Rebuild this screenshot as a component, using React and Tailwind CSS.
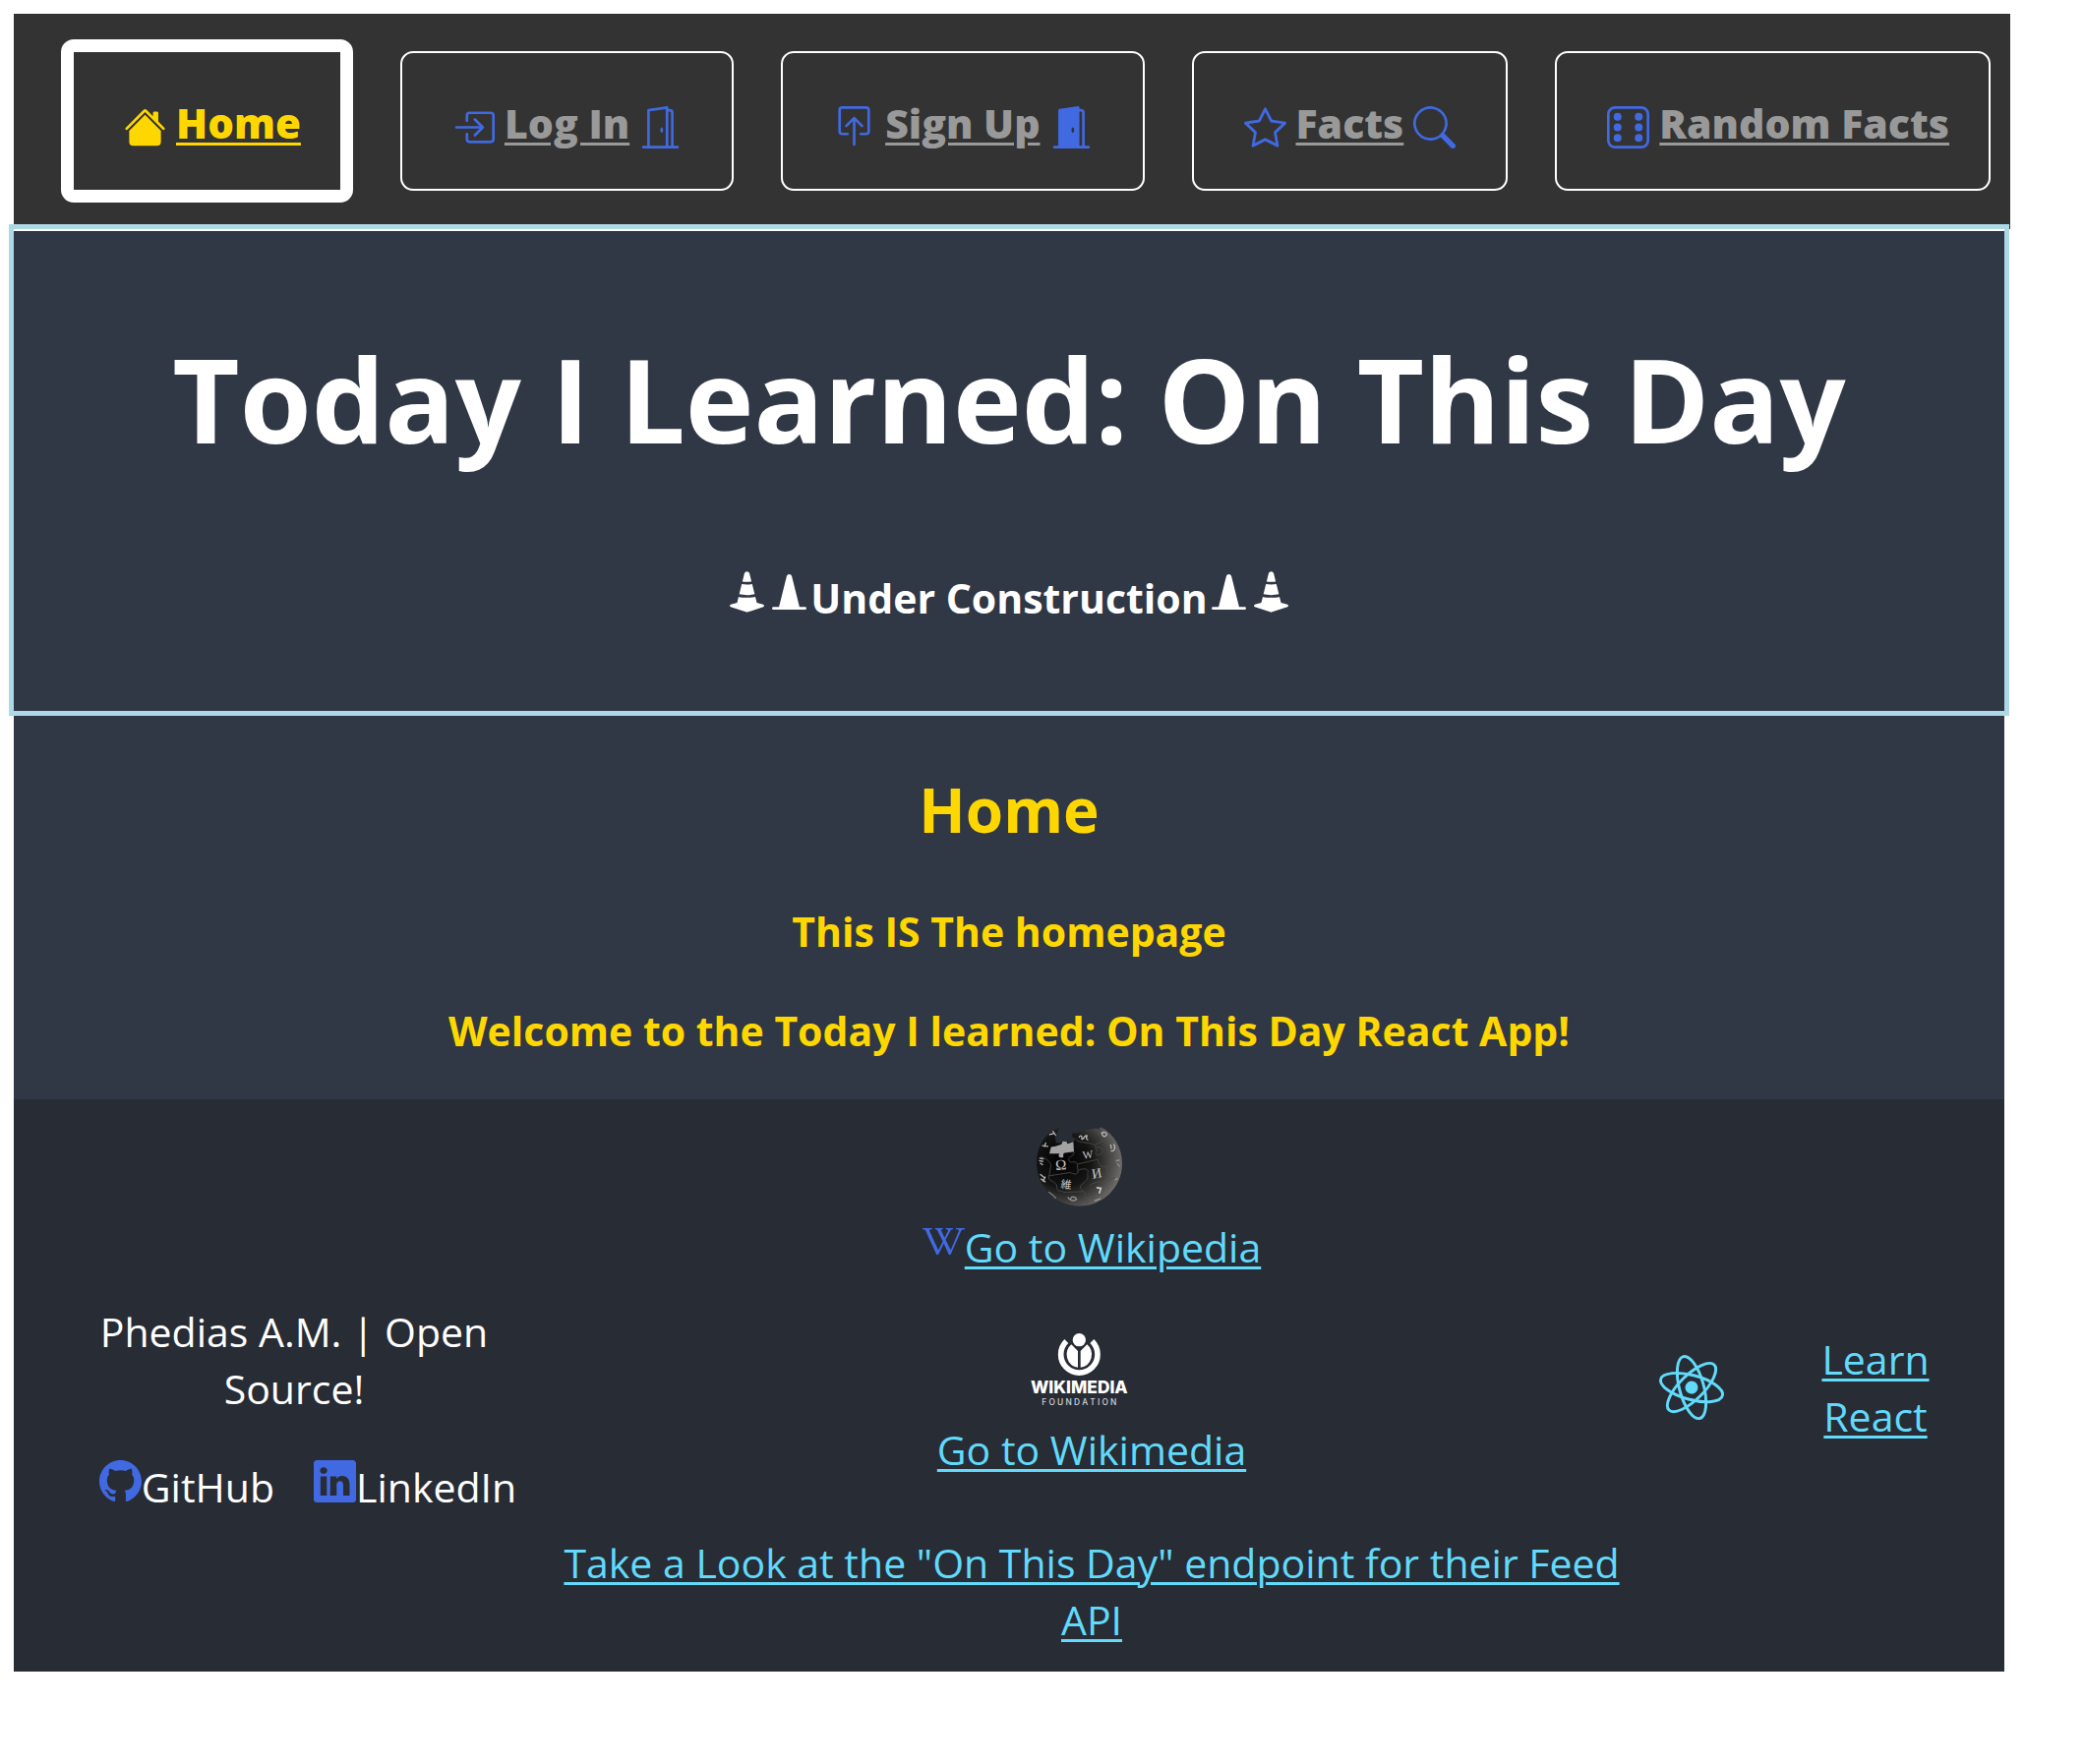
import {
  BsBoxArrowInRight,
  BsBoxArrowInUp,
  BsCone,
  BsConeStriped,
  BsDice6,
  BsDoorOpen,
  BsDoorOpenFill,
  BsGithub,
  BsHouseFill,
  BsLinkedin,
  BsSearch,
  BsStar,
  BsWikipedia,
} from "react-icons/bs";

const iconClass = "inline size-[43px] shrink-0 align-baseline";
const linkClass =
  "text-[#61dafb] underline decoration-[3px] underline-offset-[4px]";

function NavItem({ label, Lead, Trail, active }) {
  const frame = active
    ? "h-[166px] border-[13px] border-white text-[#ffd700] text-[42px]"
    : "h-[142px] border-2 border-white text-[#999999]";
  const icon = active ? "text-[#ffd700]" : "text-[#4169e1]";
  return (
    <li
      className={`flex items-center gap-[10px] rounded-[13px] pt-1 pl-[51px] ${Trail ? "pr-[51px]" : "pr-10"} ${frame}`}
    >
      <Lead className={`mt-2 size-[43px] shrink-0 ${icon}`} />
      <a
        href="#"
        className="font-extrabold whitespace-nowrap underline decoration-[3px] underline-offset-[4px]"
      >
        {label}
      </a>
      {Trail && <Trail className={`mt-2 size-[43px] shrink-0 ${icon}`} />}
    </li>
  );
}

function WikipediaGlobe() {
  const glyph = { fill: "#c9c9c9", fontFamily: "Liberation Serif, serif" };
  return (
    <svg
      viewBox="522 107 261 242"
      className="h-[81px] w-[87px]"
      role="img"
      aria-label="Wikipedia globe"
    >
      <defs>
        <radialGradient id="globe" cx="0.3" cy="0.42" r="0.75">
          <stop offset="0" stopColor="#000000" />
          <stop offset="0.45" stopColor="#141414" />
          <stop offset="0.7" stopColor="#3f3e3d" />
          <stop offset="1" stopColor="#7a7876" />
        </radialGradient>
        <clipPath id="globe-edge">
          <circle cx="652" cy="218" r="130" />
        </clipPath>
      </defs>
      <path
        d="M592 108 L572 117 C540 138 522 175 522 216 C522 290 580 348 652 348 C725 348 783 290 783 218 C783 172 758 128 720 108 L712 110 L716 118 C706 108 690 112 668 118 C662 116 652 116 648 124 L630 126 L632 138 L640 142 L634 152 L612 154 L604 148 L596 156 L582 156 L578 138 L586 124 Z"
        fill="url(#globe)"
      />
      <path
        d="M566 168 L580 166 L598 160 L602 150 L614 152 L616 158 L634 152 L636 182 L608 186 C598 190 608 198 602 200 C592 202 586 196 592 188 L561 188 Z"
        fill="#a3a3a3"
      />
      <g
        clipPath="url(#globe-edge)"
        fill="none"
        stroke="#4c4c4c"
        strokeWidth="2.5"
      >
        <path d="M636 182 C640 196 618 196 620 208 C624 222 640 206 646 220 L648 240 C650 254 636 252 624 246 L560 256 M648 220 L708 206 M700 164 L706 180 C694 196 714 196 722 184 C730 170 712 172 704 166 M708 206 C714 222 714 232 738 226 L776 222 M648 240 C662 232 684 232 678 248 C674 258 690 260 656 286 C652 302 668 296 672 316 L676 342 M560 256 C552 274 584 270 584 290 C580 304 596 300 606 306 L666 304 M536 198 C560 206 560 214 566 222 L560 256 M738 226 C730 248 748 252 744 268 C736 280 700 268 684 286 M640 142 C650 160 680 150 698 162 L724 150 C732 138 712 134 702 122 M744 268 L762 262 M724 150 C744 160 744 176 754 196" />
      </g>
      <g style={glyph} clipPath="url(#globe-edge)">
        <text x="580" y="237" fontSize="45" transform="rotate(-4 597 225)">
          Ω
        </text>
        <text x="662" y="202" fontSize="34" transform="rotate(-8 680 190)">
          W
        </text>
        <text x="690" y="262" fontSize="42" transform="rotate(-10 707 246)">
          И
        </text>
        <text
          x="596"
          y="294"
          fontSize="33"
          transform="rotate(6 612 282)"
          style={{ fontFamily: "Noto Sans CJK JP, sans-serif" }}
        >
          維
        </text>
        <path d="M705 292 L718 294 L713 310" fill="none" stroke="#c9c9c9" strokeWidth="5" />
      </g>
      <g
        clipPath="url(#globe-edge)"
        fill="none"
        stroke="#b5b5b5"
        strokeWidth="4"
        strokeLinecap="round"
      >
        <path d="M540 164 L556 166 M550 156 L546 166 M562 130 L576 126 M572 120 L580 132 M652 138 C656 130 662 134 660 144 C668 146 666 130 676 134 C672 140 674 146 678 146" />
        <path d="M720 126 C726 120 736 124 736 130 C732 140 722 136 722 128 M748 162 L750 172 M758 160 C764 172 758 182 750 180" />
        <path d="M532 202 L542 204 M531 210 L541 212 M534 218 L540 222 M534 252 L546 262 M536 266 L548 274 M548 260 L542 272" />
        <path d="M766 210 L774 208 M768 220 L775 226 M762 268 L768 264 M560 306 C566 310 574 316 580 324" opacity="0.6" />
        <path d="M618 322 C622 332 636 334 644 328 C640 318 628 318 626 326 M700 332 L716 326" opacity="0.7" />
      </g>
    </svg>
  );
}

function WikimediaLogo() {
  return (
    <svg
      viewBox="504 738 297 222"
      className="h-[74px] w-[99px]"
      role="img"
      aria-label="Wikimedia Foundation"
      fill="#ffffff"
    >
      <circle cx="652" cy="758" r="20" />
      <path
        d="M613 762 A56 56 0 1 0 691 762"
        fill="none"
        stroke="#ffffff"
        strokeWidth="17"
      />
      <path d="M628 772 L648 792 L648 842 A40 40 0 0 1 628 772 Z" />
      <path d="M676 772 L656 792 L656 842 A40 40 0 0 0 676 772 Z" />
      <text
        x="652"
        y="921"
        textAnchor="middle"
        fontSize="52"
        fontWeight="800"
        fontFamily="Inter, sans-serif"
      >
        WIKIMEDIA
      </text>
      <text
        x="652"
        y="956"
        textAnchor="middle"
        fontSize="25"
        fontWeight="500"
        fontFamily="Inter, sans-serif"
        fill="#d6d7d9"
      >
        F O U N D A T I O N
      </text>
    </svg>
  );
}

function ReactLogo() {
  return (
    <svg
      viewBox="-11.5 -10.5 23 21"
      className="w-[68px] rotate-[15deg]"
      role="img"
      aria-label="React"
    >
      <circle r="2.2" fill="#61dafb" />
      <g fill="none" stroke="#61dafb">
        <ellipse rx="11" ry="4.2" />
        <ellipse rx="11" ry="4.2" transform="rotate(60)" />
        <ellipse rx="11" ry="4.2" transform="rotate(120)" />
      </g>
    </svg>
  );
}

export default function App() {
  return (
    <div className="min-h-screen bg-white pt-[14px] pr-[81px] pl-[14px] font-['Open_Sans',sans-serif] text-[41px] leading-[58px]">
      <nav className="-mr-[6px] bg-[#333333] pb-px">
        <ul className="flex h-[218px] items-center gap-12 pl-12">
          <NavItem label="Home" Lead={BsHouseFill} active />
          <NavItem label="Log In" Lead={BsBoxArrowInRight} Trail={BsDoorOpen} />
          <NavItem label="Sign Up" Lead={BsBoxArrowInUp} Trail={BsDoorOpenFill} />
          <NavItem label="Facts" Lead={BsStar} Trail={BsSearch} />
          <NavItem label="Random Facts" Lead={BsDice6} />
        </ul>
      </nav>

      <header className="border-t-2 border-white bg-[#303745] pt-[88px] pb-[86px] text-center font-bold text-white outline-[5px] outline-[#add8e6]">
        <h1 className="text-[118px] leading-[166px]">
          Today I Learned: On This Day
        </h1>
        <p className="mt-[90px]">
          <BsConeStriped className={iconClass} />
          <BsCone className={iconClass} />
          Under Construction
          <BsCone className={iconClass} />
          <BsConeStriped className={iconClass} />
        </p>
      </header>

      <main className="bg-[#303745] pt-[58px] pb-[41px] text-center font-bold text-[#ffd700]">
        <h2 className="text-[62px] leading-[84px]">Home</h2>
        <p className="mt-[53px]">This IS The homepage</p>
        <p className="mt-[43px]">
          Welcome to the Today I learned: On This Day React App!
        </p>
      </main>

      <footer className="grid grid-cols-[514fr_1108fr_112fr_262fr] items-center bg-[#282c34] pt-7 pb-6 pl-7 text-center text-white">
        <div className="pt-[43px]">
          <p className="px-8">Phedias A.M. | Open Source!</p>
          <div className="mt-[42px] flex justify-center gap-10 pl-7">
            <span>
              <BsGithub className={`${iconClass} text-[#4169e1]`} />
              GitHub
            </span>
            <span>
              <BsLinkedin className={`${iconClass} text-[#4169e1]`} />
              LinkedIn
            </span>
          </div>
        </div>

        <div className="flex flex-col items-center">
          <div className="pr-[26px]">
            <WikipediaGlobe />
          </div>
          <p className="mt-3">
            <BsWikipedia className={`${iconClass} text-[#4169e1]`} />
            <a href="#" className={linkClass}>
              Go to Wikipedia
            </a>
          </p>
          <div className="mt-[59px] pr-[26px]">
            <WikimediaLogo />
          </div>
          <a href="#" className={`mt-[15px] ${linkClass}`}>
            Go to Wikimedia
          </a>
          <a href="#" className={`mt-[57px] px-4 ${linkClass}`}>
            Take a Look at the "On This Day" endpoint for their Feed API
          </a>
        </div>

        <div className="flex justify-center">
          <ReactLogo />
        </div>

        <p className="px-16">
          <a href="#" className={linkClass}>
            Learn React
          </a>
        </p>
      </footer>
    </div>
  );
}
